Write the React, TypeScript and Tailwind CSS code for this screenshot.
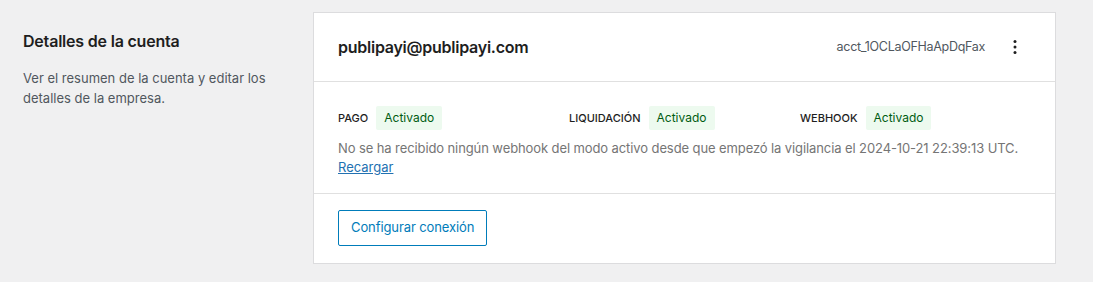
import React from 'react';

const statuses = [
    { label: 'Pago', value: 'Activado' },
    { label: 'Liquidación', value: 'Activado' },
    { label: 'Webhook', value: 'Activado' },
];

const App = () => {
    return (
        <div className="min-h-[282px] w-full bg-[#f0f0f1] font-['Inter','Liberation_Sans',sans-serif] text-[#1e1e1e]">
            <div className="flex items-start px-[23px] pt-[12px]">
                {/* Left description */}
                <div className="w-[267px] shrink-0 pr-[20px] pt-[17px]">
                    <h2 className="text-[16px] font-semibold leading-6 tracking-[-0.2px] text-[#1e1e1e]">Detalles de la cuenta</h2>
                    <p className="mt-[15px] text-[13px] leading-[20px] text-[#50575e]">
                        Ver el resumen de la cuenta y editar los detalles de la empresa.
                    </p>
                </div>

                {/* Card */}
                <div className="ml-[23px] w-[743px] border border-[#dcdcde] bg-white">
                    <div className="flex h-[68px] items-center justify-between pl-[24px] pr-[28px]">
                        <span className="text-[16px] font-semibold tracking-[-0.25px] text-[#1e1e1e]">publipayi@publipayi.com</span>
                        <div className="flex items-center gap-[18px]">
                            <span className="text-[12.5px] tracking-[-0.3px] text-[#50575e]">acct_1OCLaOFHaApDqFax</span>
                            <button className="flex h-[24px] w-[24px] items-center justify-center text-[#1e1e1e]">
                                <svg width="24" height="24" viewBox="0 0 24 24" fill="currentColor">
                                    <circle cx="12" cy="6.5" r="1.5" />
                                    <circle cx="12" cy="12" r="1.5" />
                                    <circle cx="12" cy="17.5" r="1.5" />
                                </svg>
                            </button>
                        </div>
                    </div>

                    <div className="border-t border-[#e0e0e0] px-[24px] pt-[24px] pb-[16px]">
                        <div className="grid grid-cols-3">
                            {statuses.map((s) => (
                                <div key={s.label} className="flex items-center gap-[8px]">
                                    <span className="text-[11px] font-medium uppercase text-[#1e1e1e]">{s.label}</span>
                                    <span className="rounded-[2px] bg-[#edfaef] px-[8px] text-[12px] leading-[24px] text-[#005c12]">
                                        {s.value}
                                    </span>
                                </div>
                            ))}
                        </div>
                        <p className="mt-[9px] text-[13px] leading-[19px] tracking-[-0.1px] text-[#757575]">
                            No se ha recibido ningún webhook del modo activo desde que empezó la vigilancia el 2024-10-21 22:39:13 UTC.
                        </p>
                        <a href="#" className="block w-fit text-[13px] leading-[19px] text-[#2271b1] underline">Recargar</a>
                    </div>

                    <div className="border-t border-[#e0e0e0] px-[24px] pt-[16px] pb-[17px]">
                        <button className="h-[36px] rounded-[2px] border border-[#007cba] px-[12px] text-[13px] tracking-[-0.1px] text-[#007cba]">
                            Configurar conexión
                        </button>
                    </div>
                </div>
            </div>
        </div>
    );
};

export default App;
